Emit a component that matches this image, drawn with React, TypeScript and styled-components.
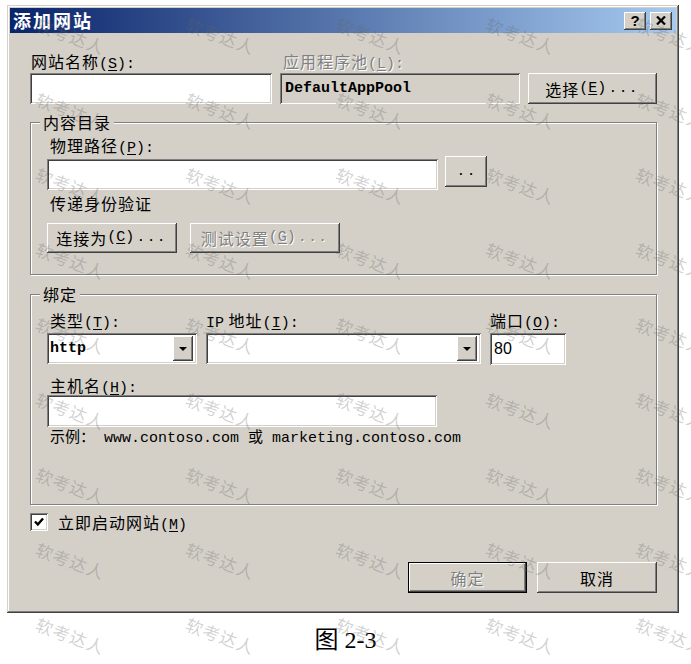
import React from "react";
import styled, { createGlobalStyle, css } from "styled-components";

const CJK = `"Noto Sans CJK SC", "Noto Sans", sans-serif`;
const MONO = `"Liberation Mono", "Noto Sans CJK SC", monospace`;

const GlobalStyle = createGlobalStyle`
  html, body { margin: 0; padding: 0; background: #fff; }
  body { font-family: ${CJK}; }
  * { box-sizing: border-box; }
`;

const raised = css`
  background: #d4d0c8;
  box-shadow: inset -1px -1px #404040, inset 1px 1px #fff, inset -2px -2px #808080,
    inset 2px 2px #d4d0c8;
`;

const sunken = css`
  box-shadow: inset 1px 1px #808080, inset -1px -1px #fff, inset 2px 2px #404040,
    inset -2px -2px #d4d0c8;
`;

const Page = styled.div`
  position: relative;
  width: 691px;
  height: 664px;
  overflow: hidden;
  background: #fff;
`;

const Dialog = styled.div`
  margin: 5px 0 0 7px;
  width: 672px;
  height: 608px;
  padding: 3px;
  background: #d4d0c8;
  box-shadow: inset -1px -1px #404040, inset 1px 1px #d4d0c8, inset -2px -2px #808080,
    inset 2px 2px #fff;
  display: flex;
  flex-direction: column;
`;

const TitleBar = styled.div`
  height: 25px;
  display: flex;
  align-items: center;
  padding: 0 4px 0 3px;
  background: linear-gradient(to right, #0a246a, #a6caf0);
`;

const Title = styled.span`
  flex: 1;
  color: #fff;
  font: bold 18px/25px ${CJK};
  letter-spacing: 2px;
`;

const CaptionButtons = styled.div`
  display: flex;
  gap: 4px;
`;

const CaptionButton = styled.div`
  width: 22px;
  height: 18px;
  ${raised};
  display: flex;
  align-items: center;
  justify-content: center;
  font: bold 15px/18px "Liberation Sans", sans-serif;
  color: #000;
`;

const Body = styled.div`
  flex: 1;
  display: flex;
  flex-direction: column;
  padding: 0 19px 0 20px;
`;

const Label = styled.div<{ $disabled?: boolean; $indent?: number; $mt?: number }>`
  height: 20px;
  margin-top: ${(p) => p.$mt ?? 0}px;
  padding-left: ${(p) => p.$indent ?? 3}px;
  font: 16px/20px ${CJK};
  letter-spacing: 1px;
  color: #000;
  white-space: nowrap;
  ${(p) =>
    p.$disabled &&
    css`
      color: #808080;
      text-shadow: 1px 1px 0 #fff;
    `}
`;

const Key = styled.span`
  font-family: ${MONO};
  font-size: 15px;
  letter-spacing: 0;
  & u {
    text-underline-offset: 2px;
  }
`;

const TopGrid = styled.div`
  margin-top: 18px;
  display: grid;
  grid-template-columns: 242px 240px 129px;
  column-gap: 8px;
  row-gap: 2px;
`;

const Field = styled.div<{ $w?: number; $h?: number; $disabled?: boolean; $mt?: number }>`
  width: ${(p) => (p.$w ? `${p.$w}px` : "auto")};
  height: ${(p) => p.$h ?? 31}px;
  margin-top: ${(p) => p.$mt ?? 0}px;
  background: ${(p) => (p.$disabled ? "#d4d0c8" : "#fff")};
  ${sunken};
  display: flex;
  align-items: center;
  padding: 0 5px;
  font: bold 15px/20px ${MONO};
  color: #000;
  white-space: nowrap;
`;

const PortText = styled.span`
  font: 16px/20px "Liberation Sans", sans-serif;
  margin-left: -1px;
`;

const Button = styled.button<{ $w: number; $h?: number; $default?: boolean; $disabled?: boolean }>`
  appearance: none;
  margin: 0;
  padding: 0;
  width: ${(p) => p.$w}px;
  height: ${(p) => p.$h ?? 31}px;
  border: ${(p) => (p.$default ? "1px solid #000" : "none")};
  ${raised};
  font: 16px/20px ${CJK};
  letter-spacing: 1px;
  color: ${(p) => (p.$disabled ? "#808080" : "#000")};
  text-shadow: ${(p) => (p.$disabled ? "1px 1px 0 #fff" : "none")};
  display: flex;
  align-items: center;
  justify-content: center;
  white-space: nowrap;
`;

const Dots = styled.span`
  font: bold 12px/12px ${MONO};
  letter-spacing: 3px;
  margin-left: 3px;
`;

const Group = styled.div<{ $mt: number; $pb: number }>`
  margin-top: ${(p) => p.$mt}px;
  border: 1px solid #808080;
  box-shadow: inset 1px 1px #fff, 1px 1px #fff;
  padding: 0 16px ${(p) => p.$pb}px 16px;
  display: flex;
  flex-direction: column;
`;

const Legend = styled.div`
  align-self: flex-start;
  margin: -11px 0 0 -7px;
  padding: 0 3px;
  height: 20px;
  background: #d4d0c8;
  font: 16px/20px ${CJK};
  letter-spacing: 1px;
  color: #000;
`;

const PathRow = styled.div`
  margin-top: 1px;
  display: flex;
  align-items: flex-start;
  gap: 7px;
`;

const ButtonRow = styled.div<{ $mt: number; $gap: number; $end?: boolean }>`
  margin-top: ${(p) => p.$mt}px;
  display: flex;
  gap: ${(p) => p.$gap}px;
  justify-content: ${(p) => (p.$end ? "flex-end" : "flex-start")};
`;

const BindGrid = styled.div`
  margin-top: 6px;
  display: grid;
  grid-template-columns: 150px 275px 76px;
  column-gap: 9px;
  row-gap: 3px;
  align-items: start;
`;

const Combo = styled.div`
  height: 31px;
  background: #fff;
  ${sunken};
  display: flex;
  align-items: stretch;
  padding: 3px 4px 3px 3px;
`;

const ComboText = styled.span`
  flex: 1;
  font: bold 15px/25px ${MONO};
  color: #000;
`;

const DropButton = styled.div`
  width: 20px;
  ${raised};
  display: flex;
  align-items: center;
  justify-content: center;
`;

const Arrow = styled.span`
  width: 0;
  height: 0;
  border-left: 4px solid transparent;
  border-right: 4px solid transparent;
  border-top: 4px solid #000;
`;

const Example = styled.div`
  margin-top: 2px;
  padding-left: 3px;
  height: 20px;
  font: 15px/20px ${MONO};
  color: #000;
  white-space: nowrap;
`;

const CheckRow = styled.div`
  margin-top: 7px;
  height: 20px;
  display: flex;
  align-items: center;
  gap: 10px;
`;

const CheckBox = styled.span`
  width: 18px;
  height: 18px;
  background: #fff;
  ${sunken};
  display: flex;
  align-items: center;
  justify-content: center;
`;

const Caption = styled.div`
  margin-top: 12px;
  width: 691px;
  text-align: center;
  font: 24px/30px "Liberation Serif", "Noto Sans CJK SC", serif;
  color: #000;
`;

const WatermarkLayer = styled.div`
  position: absolute;
  inset: 0;
  pointer-events: none;
  display: grid;
  grid-template-columns: repeat(5, 150px);
  grid-auto-rows: 75px;
  padding: 14px 0 0 40px;
`;

const Mark = styled.span`
  align-self: start;
  justify-self: start;
  font: 17px/20px ${CJK};
  letter-spacing: 1px;
  color: rgba(100, 100, 100, 0.3);
  transform: rotate(20deg);
  transform-origin: 0 0;
  white-space: nowrap;
`;

const M = ({ k, tail = ":" }: { k: string; tail?: string }) => (
  <Key>
    (<u>{k}</u>){tail}
  </Key>
);

export default function App() {
  return (
    <Page>
      <GlobalStyle />
      <Dialog>
        <TitleBar>
          <Title>添加网站</Title>
          <CaptionButtons>
            <CaptionButton>?</CaptionButton>
            <CaptionButton>
              <svg width="10" height="9" viewBox="0 0 10 9">
                <path d="M1 0.5 L9 8.5 M9 0.5 L1 8.5" stroke="#000" strokeWidth="2.2" fill="none" />
              </svg>
            </CaptionButton>
          </CaptionButtons>
        </TitleBar>
        <Body>
          <TopGrid>
            <Label $indent={1}>
              网站名称<M k="S" />
            </Label>
            <Label $disabled>
              应用程序池<M k="L" />
            </Label>
            <span />
            <Field />
            <Field $disabled>DefaultAppPool</Field>
            <Button $w={129}>
              选择<M k="E" tail="" />
              <Dots>...</Dots>
            </Button>
          </TopGrid>

          <Group $mt={18} $pb={21}>
            <Legend>内容目录</Legend>
            <Label $mt={3}>
              物理路径<M k="P" />
            </Label>
            <PathRow>
              <Field $w={391} $mt={3} />
              <Button $w={42}>
                <Dots>..</Dots>
              </Button>
            </PathRow>
            <Label $mt={3}>传递身份验证</Label>
            <ButtonRow $mt={10} $gap={13}>
              <Button $w={130} $h={30}>
                连接为<M k="C" tail="" />
                <Dots>...</Dots>
              </Button>
              <Button $w={150} $h={30} $disabled>
                测试设置<M k="G" tail="" />
                <Dots>...</Dots>
              </Button>
            </ButtonRow>
          </Group>

          <Group $mt={19} $pb={55}>
            <Legend>绑定</Legend>
            <BindGrid>
              <Label>
                类型<M k="T" />
              </Label>
              <Label $indent={0}>
                <Key>IP</Key> 地址<M k="I" />
              </Label>
              <Label $indent={0}>
                端口<M k="O" />
              </Label>
              <Combo>
                <ComboText>http</ComboText>
                <DropButton>
                  <Arrow />
                </DropButton>
              </Combo>
              <Combo>
                <ComboText />
                <DropButton>
                  <Arrow />
                </DropButton>
              </Combo>
              <Field $h={32}>
                <PortText>80</PortText>
              </Field>
            </BindGrid>
            <Label $mt={10}>
              主机名<M k="H" />
            </Label>
            <Field $w={390} $h={32} />
            <Example>示例： www.contoso.com 或 marketing.contoso.com</Example>
          </Group>

          <CheckRow>
            <CheckBox>
              <svg width="12" height="12" viewBox="0 0 12 12">
                <path d="M2 5.5 L4.8 8.5 L10 2.5" stroke="#000" strokeWidth="2.4" fill="none" />
              </svg>
            </CheckBox>
            <Label $indent={0}>
              立即启动网站<Key>
                (<u>M</u>)
              </Key>
            </Label>
          </CheckRow>

          <ButtonRow $mt={30} $gap={10} $end>
            <Button $w={119} $default $disabled>
              确定
            </Button>
            <Button $w={120}>取消</Button>
          </ButtonRow>
        </Body>
      </Dialog>
      <Caption>图 2-3</Caption>
      <WatermarkLayer>
        {Array.from({ length: 45 }, (_, i) => (
          <Mark key={i}>软考达人</Mark>
        ))}
      </WatermarkLayer>
    </Page>
  );
}
